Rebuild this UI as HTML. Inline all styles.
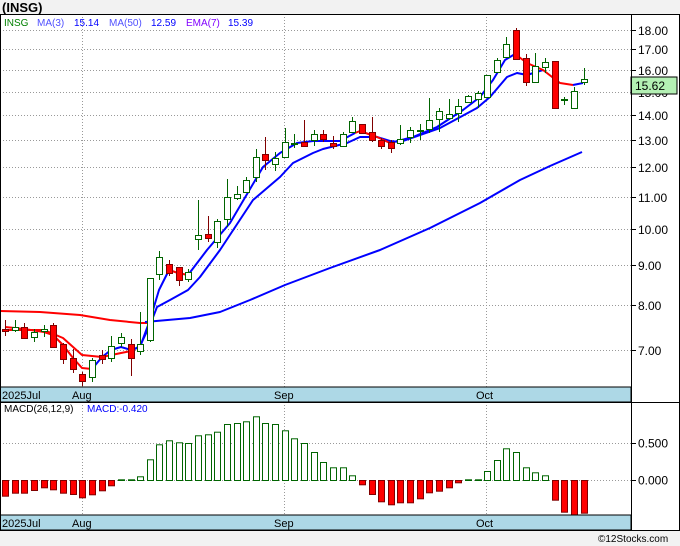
<!DOCTYPE html>
<html><head><meta charset="utf-8"><style>
body{margin:0;width:680px;height:546px;background:#f2f2f2;overflow:hidden;font-family:"Liberation Sans",sans-serif}
svg{position:absolute;left:0;top:0}
</style></head><body>
<svg id="s" width="680" height="546" xmlns="http://www.w3.org/2000/svg" font-family="Liberation Sans, DejaVu Sans, sans-serif">
<rect x="0" y="14" width="680" height="517" fill="#fff"/>
<text x="2" y="12" font-size="13" font-weight="bold" fill="#000">(INSG)</text>
<g id="grid" stroke="#999" stroke-dasharray="1,2" stroke-width="1"></g>
<g id="lines" fill="none" stroke-width="2" stroke-linejoin="round"></g>
<g id="candles"></g>
<g id="macd"></g>
<rect x="0" y="387" width="631" height="15" fill="#add8e6" stroke="#000"/>
<rect x="0" y="515" width="631" height="15" fill="#add8e6" stroke="#000"/>
<g font-size="11" fill="#000">
<text x="2" y="399">2025Jul</text><text x="72" y="399">Aug</text><text x="274" y="399">Sep</text><text x="476" y="399">Oct</text>
<text x="2" y="527">2025Jul</text><text x="72" y="527">Aug</text><text x="274" y="527">Sep</text><text x="476" y="527">Oct</text>
</g>
<g font-size="10">
<text x="4" y="26" fill="#008000">INSG</text>
<text x="37" y="26" fill="#5050ff">MA(3)</text><text x="74" y="26" fill="#0000ff">15.14</text>
<text x="109" y="26" fill="#5050ff">MA(50)</text><text x="151" y="26" fill="#0000ff">12.59</text>
<text x="186" y="26" fill="#8000ff">EMA(7)</text><text x="228" y="26" fill="#0000ff">15.39</text>
<text x="4" y="412" fill="#000">MACD(26,12,9)</text>
<text x="87" y="412" fill="#0000ff">MACD:-0.420</text>
</g>
<g id="axis" font-size="12" fill="#000"></g>
<rect x="631" y="77" width="46" height="17" fill="#b4f0b4" stroke="#000"/>
<text x="635" y="90" font-size="12">15.62</text>
<g stroke="#000" fill="none" stroke-width="1">
<rect x="0.5" y="14.5" width="679" height="516"/>
<line x1="631.5" y1="14" x2="631.5" y2="531"/>
<line x1="0" y1="402.5" x2="680" y2="402.5"/>
</g>
<text x="598" y="542" font-size="10" fill="#000">©12Stocks.com</text>
</svg>
<script>
var NS="http://www.w3.org/2000/svg";
function el(p,t,a){var e=document.createElementNS(NS,t);for(var k in a)e.setAttribute(k,a[k]);document.getElementById(p).appendChild(e);return e;}
function Y(p){return 30+(Math.log(18)-Math.log(p))*339;}
var prices=[18,17,16,15,14,13,12,11,10,9,8,7];
prices.forEach(function(p){var y=Math.round(Y(p))+0.5;
 el("grid","line",{x1:0,x2:631,y1:y,y2:y});
 el("axis","line",{x1:631,x2:636,y1:y,y2:y,stroke:"#000"});
 var t=el("axis","text",{x:638,y:y+4.5});t.textContent=p.toFixed(2);});
[82.5,284.5,486.5].forEach(function(x){el("grid","line",{x1:x,x2:x,y1:14,y2:387});el("grid","line",{x1:x,x2:x,y1:402,y2:515});});
[443.5,480.5].forEach(function(y){el("grid","line",{x1:0,x2:631,y1:y,y2:y});});
[[443,"0.500"],[480,"0.000"]].forEach(function(a){el("axis","line",{x1:631,x2:636,y1:a[0]+.5,y2:a[0]+.5,stroke:"#000"});var t=el("axis","text",{x:638,y:a[0]+4.5});t.textContent=a[1];});
var C=[[329,331,320,336,'r'],[327,330,320,332,'g'],[327,338,323,338,'r'],[332,337,329,342,'g'],[329,331,325,337,'g'],[325,347,323,347,'r'],[344,359,343,364,'r'],[358,369,349,373,'r'],[374,381,372,386,'r'],[360,377,358,382,'g'],
[355,359,350,364,'r'],[346,358,336,362,'g'],[337,343,333,347,'g'],[344,358,339,376,'r'],[344,351,312,355,'g'],[278,340,278,342,'g'],[257,274,251,280,'g'],[264,273,260,276,'r'],[267,280,267,286,'r'],[272,279,269,282,'g'],
[235,239,200,250,'g'],[234,238,216,242,'r'],[221,242,219,248,'g'],[197,219,179,227,'g'],[194,198,186,200,'g'],[180,192,177,193,'g'],[157,177,149,182,'g'],[154,160,137,170,'r'],[158,164,152,171,'g'],[142,157,128,157,'g'],
[143,144,134,148,'g'],[142,146,120,147,'r'],[134,140,130,146,'g'],[134,139,130,142,'r'],[143,146,136,149,'r'],[134,146,132,147,'g'],[121,132,117,133,'g'],[124,133,124,133,'r'],[132,140,117,142,'r'],[140,146,138,149,'r'],
[142,148,140,153,'r'],[139,143,125,145,'g'],[130,137,127,143,'g'],[130,131,124,140,'g'],[120,129,98,133,'g'],[111,119,108,132,'g'],[114,118,99,120,'g'],[106,113,99,122,'g'],[96,102,95,103,'g'],[93,99,91,108,'g'],
[75,97,75,97,'g'],[60,72,58,73,'g'],[44,57,37,57,'g'],[30,59,28,59,'r'],[58,82,54,86,'r'],[66,82,53,82,'g'],[62,67,58,73,'g'],[61,108,61,108,'r'],[99,100,97,105,'g'],[91,108,87,109,'g'],[79,82,68,85,'g']];
C.forEach(function(c,i){var x=Math.round(5.2+9.64*i)+0.5;var col=c[4]=='g'?'#006400':'#800000';
 el("candles","line",{x1:x,x2:x,y1:c[2],y2:c[3],stroke:col});
 el("candles","rect",{x:x-3,y:c[0]+.5,width:6,height:Math.max(1,c[1]-c[0]),fill:c[4]=='g'?'#fff':'#f00',stroke:col});});
function pl(pts,col){el("lines","polyline",{points:pts.map(function(p){return p.join(",")}).join(" "),stroke:col});}
pl([[0,311],[40,312],[80,315],[110,320],[140,323],[150,323]],"#f00");
pl([[145,322],[190,318],[220,312],[250,300],[285,285],[330,268],[380,250],[430,228],[480,203],[520,180],[550,166],[582,152]],"#00f");
pl([[5,330],[44,330],[63,338],[82,355],[102,357],[121,353],[131,351]],"#f00");
pl([[131,351],[140,346],[150,325],[157,307],[170,300],[188,290],[200,277],[220,250],[253,200],[280,177],[293,163],[313,153],[323,149],[347,143],[360,137],[377,137],[390,141],[400,142],[440,128],[477,108],[490,97],[507,77],[517,73],[527,75],[543,70]],"#00f");
pl([[5,327],[24,329],[44,332],[53,335],[63,345],[73,358],[82,368],[92,369]],"#f00");
pl([[92,369],[102,357],[111,350],[121,347],[131,350],[140,347],[150,320],[159,290],[169,270]],"#00f");
pl([[169,270],[178,273],[188,275]],"#f00");
pl([[188,275],[207,250],[230,223],[263,167],[280,153],[297,143],[313,141],[340,141],[355,133]],"#00f");
pl([[355,133],[360,131],[377,137],[390,143]],"#f00");
pl([[390,143],[413,137],[437,127],[463,110],[480,97],[493,80],[505,60],[515,54]],"#00f");
pl([[515,54],[527,63],[543,70],[560,83],[573,85]],"#f00");
pl([[573,85],[583,83]],"#00f");
var M=[-15.7,-12.7,-12.7,-10,-7.3,-9.3,-12.7,-14,-17.3,-14.3,-10.3,-5.3,.7,.7,3.7,20.7,35.7,39.7,37.7,37,44.7,45.7,48.3,56,57,58.7,63.7,57,56,49.7,41.7,37,28,18,12.7,12.7,4.7,-4.3,-14,-21.3,-24.3,-22.3,-22.3,-18.3,-12.3,-10.7,-7.3,-2.3,.7,.7,9,20,31.7,28,12.7,7.7,4.7,-19.7,-31.7,-36,-32.7];
M.forEach(function(v,i){var x=Math.round(2.2+9.64*i)+0.5;
 if(v>0) el("macd","rect",{x:x,y:480.5-v,width:6,height:v,fill:"#fff",stroke:"#006400"});
 else el("macd","rect",{x:x,y:480.5,width:6,height:-v,fill:"#f00",stroke:"#800000"});});
</script>
</body></html>
